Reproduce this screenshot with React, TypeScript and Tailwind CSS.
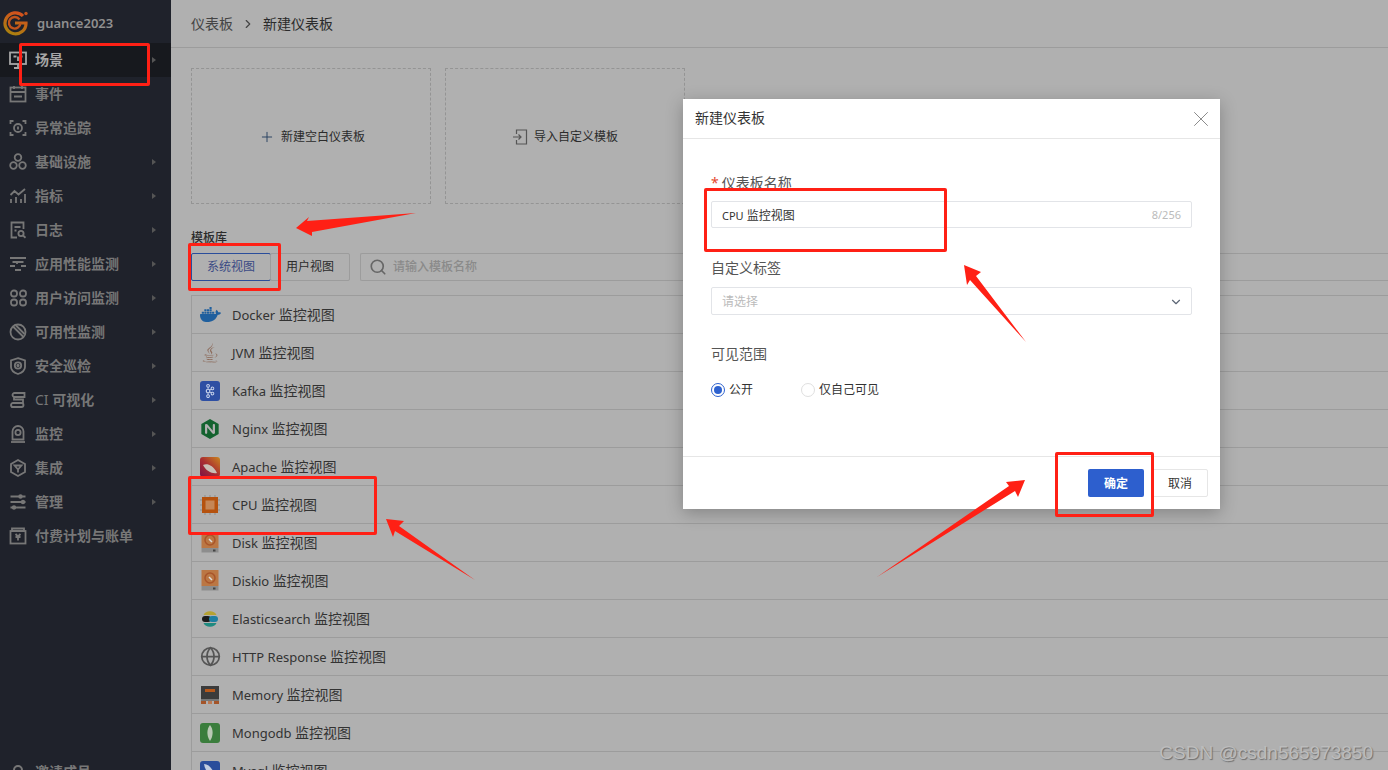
import React from "react";
import { ChevronDown, ChevronRight, Globe, Plus, Search, X } from "lucide-react";
import { SiDocker, SiNginx, SiApachekafka } from "react-icons/si";
import { FaJava } from "react-icons/fa";

const S = { width: 20, height: 20, viewBox: "0 0 20 20", fill: "none", stroke: "currentColor", strokeWidth: 1.8 } as const;

const navIcons: Record<string, React.ReactNode> = {
  scene: <svg {...S}><rect x="2" y="2.5" width="16" height="11.500" /><path d="M6 18h8M10 14v4M5.500 6.500h3M11.500 6.500h3M10 6.500v4.500" /></svg>,
  event: <svg {...S}><rect x="2.5" y="3.5" width="15" height="14" /><path d="M2.5 8h15M6 2v3M14 2v3M6 12.5h8" /></svg>,
  trace: <svg {...S}><path d="M2.5 6V3h3M14.5 3h3v3M2.5 14v3h3M14.5 17h3v-3" /><circle cx="10" cy="10" r="4" /><path d="M10 8.5v3" /></svg>,
  infra: <svg {...S}><circle cx="10" cy="5.5" r="3.3" /><circle cx="5.5" cy="13.5" r="3.3" /><circle cx="14.5" cy="13.5" r="3.3" /></svg>,
  metric: <svg {...S}><path d="M3 17v-4M8 17v-6M13 17v-4M17 17V8M2.5 9l4-4 4 3.5L17 3" /></svg>,
  log: <svg {...S}><path d="M9 17.5H3.5v-15h12V9" /><path d="M6.5 7h6M6.5 10.5h2" /><circle cx="13" cy="13.5" r="2.6" /><path d="M15 15.5l2.5 2.2" /></svg>,
  apm: <svg {...S}><path d="M2 4h16M4.5 8h11M2 12h5M13 12h5M7 16h6M9 8v2" /></svg>,
  rum: <svg {...S}><rect x="3" y="2.5" width="6" height="6" rx="2.8" /><rect x="12" y="2.5" width="6" height="6" rx="2.8" /><rect x="3" y="11.5" width="6" height="6" rx="2.8" /><rect x="12" y="11.5" width="6" height="6" rx="2.8" /></svg>,
  avail: <svg {...S}><circle cx="10" cy="10" r="7.5" /><path d="M5 4.5L15.5 15M8 3.5l8.5 8.5" /></svg>,
  sec: <svg {...S}><path d="M10 2.2l7 2.3v6.5c0 3.5-3.5 5.800-7 7-3.500-1.200-7-3.500-7-7V4.500z" /><circle cx="10" cy="9.500" r="3.200" /><path d="M10 8v3M8.500 9.500h3" /></svg>,
  ci: <svg {...S}><path d="M16.500 7H6.500a2 2 0 0 1 0-4h10v4zM3 17h10.500a2 2 0 0 0 0-4H5a2 2 0 0 0 0 4M6 7v2.500h9V13" /></svg>,
  mon: <svg {...S}><path d="M4.500 15.500V7.500a5.500 5.500 0 0 1 11 0v8z" /><circle cx="10" cy="8.500" r="2.600" /><path d="M3 18h14" /></svg>,
  integ: <svg {...S}><path d="M10 2l7 4v8l-7 4-7-4V6z" /><path d="M6.500 7.500h7L10 11.500zM10 11.500v3" /></svg>,
  admin: <svg {...S}><path d="M2.500 4.500h15M2.500 10h15M2.500 15.500h15" /><circle cx="12.500" cy="4.500" r="1.300" fill="currentColor" /><circle cx="15" cy="10" r="1.300" fill="currentColor" /><circle cx="6" cy="15.500" r="1.300" fill="currentColor" /></svg>,
  bill: <svg {...S}><rect x="2.500" y="5" width="15" height="12.500" /><path d="M4 2.500h12V5H4zM7.500 8l2.500 2.500L12.500 8M7.500 11h5M10 10.500v4" /></svg>,
};

const nav: { k: string; t: React.ReactNode; a?: boolean; c?: boolean }[] = [
  { k: "scene", t: "场景", a: true, c: true },
  { k: "event", t: "事件" },
  { k: "trace", t: "异常追踪" },
  { k: "infra", t: "基础设施", c: true },
  { k: "metric", t: "指标", c: true },
  { k: "log", t: "日志", c: true },
  { k: "apm", t: "应用性能监测", c: true },
  { k: "rum", t: "用户访问监测", c: true },
  { k: "avail", t: "可用性监测", c: true },
  { k: "sec", t: "安全巡检", c: true },
  { k: "ci", t: <><span className="font-normal">CI</span> 可视化</>, c: true },
  { k: "mon", t: "监控", c: true },
  { k: "integ", t: "集成", c: true },
  { k: "admin", t: "管理", c: true },
  { k: "bill", t: "付费计划与账单" },
];

const DiskIcon = () => (
  <svg width="20" height="21" viewBox="0 0 20 21">
    <rect x="1.500" y="0" width="17" height="16" fill="#bb7744" />
    <circle cx="10" cy="8" r="5" fill="none" stroke="#a9552a" strokeWidth="1.500" />
    <path d="M9 7l3 3" stroke="#ddd" strokeWidth="1.500" />
    <rect x="1.500" y="16" width="17" height="4.500" fill="#8d8d8d" />
    <rect x="13" y="17.500" width="2.500" height="2" fill="#444" />
  </svg>
);

const rows: { n: string; i: React.ReactNode }[] = [
  { n: "Docker", i: <SiDocker size={21} color="#1f5f9e" /> },
  { n: "JVM", i: <FaJava size={20} color="#8c6a5a" /> },
  {
    n: "Kafka",
    i: <span className="flex h-5 w-5 items-center justify-center rounded-[3px] bg-[#2e4fa3]"><SiApachekafka size={14} color="#c9d4ec" /></span>,
  },
  { n: "Nginx", i: <SiNginx size={20} color="#14622f" /> },
  {
    n: "Apache",
    i: (
      <svg width="20" height="20" viewBox="0 0 20 20">
        <defs>
          <linearGradient id="ap" x1="1" y1="0" x2="0" y2="1">
            <stop offset="0" stopColor="#c9861f" />
            <stop offset="0.500" stopColor="#ab2f30" />
            <stop offset="1" stopColor="#7b1245" />
          </linearGradient>
        </defs>
        <rect width="20" height="20" rx="3" fill="url(#ap)" />
        <path d="M3 8c4-2 10 0 14 8-5 1-11-2-14-8z" fill="#c9bfb5" />
      </svg>
    ),
  },
  {
    n: "CPU",
    i: (
      <svg width="20" height="20" viewBox="0 0 20 20">
        <path d="M0 5h20M0 10h20M0 15h20M5 0v20M10 0v20M15 0v20" stroke="#8d8d8d" strokeWidth="1" />
        <rect x="2" y="2" width="16" height="16" fill="#b5520f" />
        <rect x="5.500" y="5.500" width="9" height="9" fill="#c58656" />
      </svg>
    ),
  },
  { n: "Disk", i: <DiskIcon /> },
  { n: "Diskio", i: <DiskIcon /> },
  {
    n: "Elasticsearch",
    i: (
      <svg width="20" height="20" viewBox="0 0 20 20">
        <path d="M3.500 6a7 6 0 0 1 13 0z" fill="#b5a232" />
        <rect x="2" y="7" width="9" height="6" rx="3" fill="#1a1a1a" />
        <rect x="9" y="7" width="9" height="6" rx="3" fill="#1d7fa3" />
        <path d="M3.500 14a7 6 0 0 0 13 0z" fill="#1f8a80" />
      </svg>
    ),
  },
  { n: "HTTP Response", i: <Globe size={21} color="#555" strokeWidth={2} /> },
  {
    n: "Memory",
    i: (
      <svg width="20" height="20" viewBox="0 0 20 20">
        <rect x="1" y="1" width="18" height="13" fill="#3b3b3b" />
        <rect x="5" y="4" width="10" height="3" fill="#b5581b" />
        <rect x="1" y="14" width="18" height="2" fill="#777" />
        <rect x="1" y="16" width="5" height="3" fill="#a4552a" />
        <rect x="8" y="16" width="4" height="3" fill="#bb7a55" />
        <rect x="14" y="16" width="5" height="3" fill="#a4552a" />
      </svg>
    ),
  },
  {
    n: "Mongodb",
    i: (
      <svg width="20" height="20" viewBox="0 0 20 20">
        <rect width="20" height="20" rx="3" fill="#3a7d3c" />
        <path d="M10 2c3.500 4 3.500 11 0 16-3.500-5-3.500-12 0-16z" fill="#b9c9b4" />
      </svg>
    ),
  },
  {
    n: "Mysql",
    i: (
      <svg width="20" height="20" viewBox="0 0 20 20">
        <rect width="20" height="20" rx="3" fill="#2a4d9b" />
        <path d="M4 3c5 0 9 5 12 14-6-2-11-7-12-14z" fill="#c3cde0" />
      </svg>
    ),
  },
];

export default function App() {
  return (
    <div
      className="relative flex h-[770px] w-[1388px] overflow-hidden bg-[#b0b0b0] text-[#2b2b2b]"
      style={{ fontFamily: '"Noto Sans","Noto Sans CJK SC",sans-serif' }}
    >
      <aside className="relative w-[171px] shrink-0 bg-[#1f222b] text-[#777]">
        <div className="flex h-[43px] items-center pl-[2px] pt-[2px]">
          <svg width="26" height="26" viewBox="0 0 26 26" fill="none">
            <defs>
              <linearGradient id="lg" x1="0.600" y1="0" x2="0.200" y2="1">
                <stop offset="0" stopColor="#d2521d" />
                <stop offset="1" stopColor="#a9820f" />
              </linearGradient>
            </defs>
            <path d="M21 6A10.500 10.500 0 1 0 24 13H13" stroke="url(#lg)" strokeWidth="3.200" />
            <path d="M17.500 9.500A5.800 5.800 0 1 0 18.500 13" stroke="#c2541c" strokeWidth="2.400" />
            <circle cx="24" cy="3.500" r="1.700" fill="#c2541c" />
          </svg>
          <span className="ml-[9px] pt-[2px] text-[13px] font-semibold text-[#8f8f8f]">guance2023</span>
        </div>
        {nav.map((n) => (
          <div
            key={n.k}
            className={`flex h-[34px] items-center pl-[8px] pr-[15px] ${n.a ? "bg-[#17191e] text-[#a6a6a6]" : ""}`}
          >
            <span className="flex w-[20px] justify-center">{navIcons[n.k]}</span>
            <span className="ml-[7px] flex-1 pb-[2px] text-[14px] font-semibold">{n.t}</span>
            {n.c && <span className="h-0 w-0 border-y-[3.500px] border-l-[4px] border-y-transparent border-l-[#555]" />}
          </div>
        ))}
        <div className="absolute left-[13px] top-[763px] flex items-start text-[14px] font-semibold">
          <span className="mt-[2px] h-[12px] w-[10px] rounded-full border-2 border-[#777]" />
          <span className="ml-[12px] leading-[18px]">邀请成员</span>
        </div>
      </aside>

      <main className="min-w-0 flex-1">
        <header className="flex h-[48px] items-center border-b border-[#9c9c9c] pl-[20px] text-[14px]">
          <span className="text-[#444]">仪表板</span>
          <ChevronRight size={14} className="mx-[8px] text-[#444]" />
          <span className="text-[#2b2b2b]">新建仪表板</span>
        </header>
        <div className="pl-[20px]">
          <div className="mt-[20px] flex gap-[14px]">
            <div className="flex h-[136px] w-[240px] items-center justify-center border border-dashed border-[#949494] pl-[2px] pt-[2px] text-[12px]">
              <Plus size={16} strokeWidth={1.400} className="mr-[6px] text-[#25405f]" />
              新建空白仪表板
            </div>
            <div className="flex h-[136px] w-[240px] items-center justify-center border border-dashed border-[#949494] pt-[2px] text-[12px]">
              <svg width="16" height="16" viewBox="0 0 16 16" fill="none" stroke="#555" strokeWidth="1.200" className="mr-[6px]">
                <path d="M4.500 5V1h10v14h-10v-4M1 8h8M6.500 5.500L9 8l-2.500 2.500" />
              </svg>
              导入自定义模板
            </div>
          </div>
          <div className="mt-[26px] text-[12px] font-medium leading-[16px]">模板库</div>
          <div className="mt-[7px] flex h-[28px]">
            <div className="flex w-[80px] items-center justify-center rounded-[2px] border border-[#2a4d9b] text-[12px] text-[#3b4a85]">系统视图</div>
            <div className="ml-[-1px] flex w-[80px] items-center justify-center rounded-[2px] border border-[#9c9c9c] text-[12px]">用户视图</div>
            <div className="ml-[10px] flex flex-1 items-center rounded-l-[2px] border border-r-0 border-[#9c9c9c] pl-[8px] text-[12px] font-medium text-[#8a8a8a]">
              <Search size={18} strokeWidth={2.200} className="mr-[6px] text-[#666]" />
              请输入模板名称
            </div>
          </div>
          <div className="mt-[14px] border-l border-t border-[#9c9c9c]">
            {rows.map((r) => (
              <div key={r.n} className="flex h-[38px] items-center border-b border-[#9c9c9c] text-[13px] text-[#333]">
                <span className="flex w-[40px] shrink-0 justify-start pl-[8px]">{r.i}</span>
                <span>{r.n} <span className="text-[14px]">监控视图</span></span>
              </div>
            ))}
          </div>
        </div>
      </main>

      <div className="absolute bottom-[5px] right-[15px] text-[19px] leading-[24px] text-[#bcbcbc] [font-family:'Liberation_Sans',sans-serif] [text-shadow:1px_1px_1px_#6f6f6f]">
        CSDN @csdn565973850
      </div>

      {/* dialog */}
      <div className="absolute left-[683px] top-[99px] flex h-[410px] w-[537px] flex-col bg-white text-[#333] shadow-[0_4px_16px_rgba(0,0,0,0.25)]">
        <div className="flex h-[40px] items-center justify-between border-b border-[#e6e6e6] pb-[3px] pl-[12px] pr-[6px] text-[14px]">
          新建仪表板
          <X size={26} strokeWidth={0.900} className="mt-[3px] text-[#888]" />
        </div>
        <div className="flex-1 pl-[28px] pr-[28px]">
          <div className="mt-[34px] text-[14px] leading-[20px] text-[#555]">
            <span className="mr-[3px] text-[#e5482d]">*</span>仪表板名称
          </div>
          <div className="mt-[8px] flex h-[27px] items-center justify-between rounded-[2px] border border-[#e2e4e8] px-[10px] pt-[2px] text-[12px]">
            <span><span className="text-[11px]">CPU</span> 监控视图</span>
            <span className="text-[11px] text-[#bbb]">8/256</span>
          </div>
          <div className="mt-[30px] text-[14px] leading-[20px] text-[#555]">自定义标签</div>
          <div className="mt-[9px] flex h-[28px] items-center justify-between rounded-[2px] border border-[#e2e4e8] pl-[10px] pr-[8px] pt-[1px] text-[12px] text-[#bbb]">
            请选择
            <ChevronDown size={14} className="text-[#5c6675]" />
          </div>
          <div className="mt-[29px] text-[14px] leading-[20px] text-[#555]">可见范围</div>
          <div className="mt-[15px] flex items-center text-[12px] leading-[20px]">
            <span className="flex h-[14px] w-[14px] items-center justify-center rounded-full border border-[#2e62cf]">
              <span className="h-[8px] w-[8px] rounded-full bg-[#2e62cf]" />
            </span>
            <span className="ml-[4px] w-[72px] pt-[1px]">公开</span>
            <span className="h-[14px] w-[14px] rounded-full border border-[#dfdfdf]" />
            <span className="ml-[4px] pt-[1px]">仅自己可见</span>
          </div>
        </div>
        <div className="flex h-[53px] items-center justify-end gap-[8px] border-t border-[#e6e6e6] pr-[12px] text-[12px]">
          <span className="flex h-[28px] w-[56px] items-center justify-center rounded-[2px] bg-[#2d5fce] pt-[2px] font-semibold text-white">确定</span>
          <span className="flex h-[28px] w-[56px] items-center justify-center rounded-[2px] border border-[#e6e6e6] pt-[2px]">取消</span>
        </div>
      </div>

      {/* annotations */}
      <div className="absolute left-[19px] top-[43px] h-[43px] w-[131px] rounded-[2px] border-[3px] border-[#ff2015]" />
      <div className="absolute left-[188px] top-[243px] h-[48px] w-[93px] rounded-[2px] border-[3px] border-[#ff2015]" />
      <div className="absolute left-[188px] top-[476px] h-[59px] w-[189px] rounded-[2px] border-[3px] border-[#ff2015]" />
      <div className="absolute left-[704px] top-[188px] h-[64px] w-[243px] rounded-[2px] border-[3px] border-[#ff2015]" />
      <div className="absolute left-[1055px] top-[452px] h-[65px] w-[99px] rounded-[2px] border-[3px] border-[#ff2015]" />
      <svg className="pointer-events-none absolute left-0 top-0" width="1388" height="770" fill="#ff2015">
        <polygon points="296,228 309,217 307,221 416,213 312,232 312,236" />
        <polygon points="386,519 404,521 399,526 475,580 395,531 393,537" />
        <polygon points="964,265 981,272 976,276 1026,342 970,280 967,285" />
        <polygon points="1025,480 1006,482 1009,486 877,577 1015,491 1018,497" />
      </svg>
    </div>
  );
}
